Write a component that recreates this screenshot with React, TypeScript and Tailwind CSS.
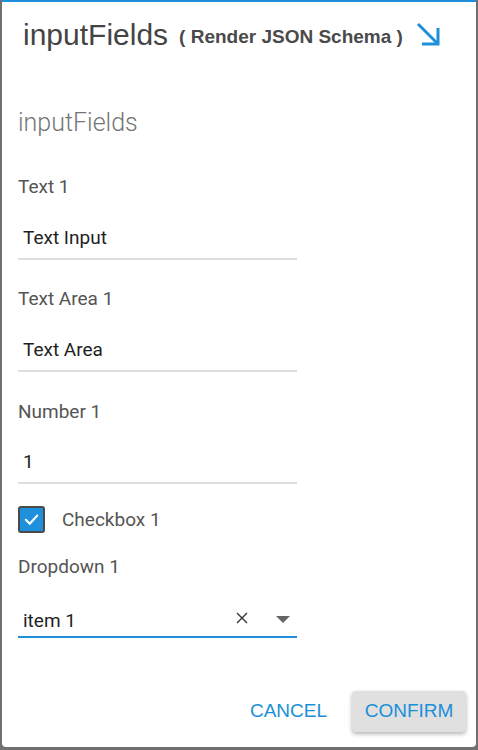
import React from "react";

const roboto = { fontFamily: "Roboto, 'Noto Sans', sans-serif" };

function Label({ children, className = "" }: { children: React.ReactNode; className?: string }) {
  return (
    <div className={`text-[19px] leading-[24px] text-[#555555] ${className}`} style={roboto}>
      {children}
    </div>
  );
}

function Field({ value, className = "" }: { value: string; className?: string }) {
  return (
    <div className={`w-[279px] border-b-2 border-[#dddddd] pl-[5px] pb-[7px] ${className}`}>
      <div className="text-[19px] leading-[26px] text-[#1f1f1f]" style={roboto}>
        {value}
      </div>
    </div>
  );
}

export default function App() {
  return (
    <div className="w-[478px] h-[750px] bg-[#707070] pl-[2px] pr-[2px] pb-[3px] flex">
      <div className="flex-1 bg-white rounded-b-[4px] border-t-2 border-[#1d8fdb] flex flex-col">
        {/* Header */}
        <div className="flex items-start pl-[21px] pr-[35px] pt-[15px]">
          <div className="flex items-baseline gap-[11px]" style={{ fontFamily: "'Liberation Sans', Arial, sans-serif" }}>
            <span className="text-[30px] leading-[36px] text-[#444444]">inputFields</span>
            <span className="relative -top-[2px] text-[19px] leading-[36px] font-bold text-[#4a4a4a]">( Render JSON Schema )</span>
          </div>
          <svg
            className="ml-auto mt-[5px]"
            width="25"
            height="25"
            viewBox="0 0 25 25"
            fill="none"
            stroke="#1d8fdb"
            strokeWidth="3"
          >
            <path d="M2 2 L22 22" />
            <path d="M7.5 22 H22 V7.5" strokeLinecap="square" />
          </svg>
        </div>

        {/* Content */}
        <div className="flex flex-col pl-[16px]">
          <div className="mt-[52px] text-[25px] leading-[28px] font-light text-[#757575]" style={roboto}>
            inputFields
          </div>

          <Label className="mt-[38px]">Text 1</Label>
          <Field value="Text Input" className="mt-[26px]" />

          <Label className="mt-[27px]">Text Area 1</Label>
          <Field value="Text Area" className="mt-[26px]" />

          <Label className="mt-[28px]">Number 1</Label>
          <Field value="1" className="mt-[25px]" />

          <div className="mt-[22px] flex items-center gap-[17px] h-[27px]">
            <div className="w-[27px] h-[27px] rounded-[3px] border-2 border-[#4a4a4a] bg-[#1e90dc] flex items-center justify-center">
              <svg width="17" height="17" viewBox="0 0 24 24" fill="none" stroke="white" strokeWidth="3" strokeLinecap="round" strokeLinejoin="round">
                <path d="M4 12.5 L9.5 18 L20 6.5" />
              </svg>
            </div>
            <Label>Checkbox 1</Label>
          </div>

          <Label className="mt-[22px]">Dropdown 1</Label>
          <div className="mt-[29px] w-[279px] border-b-2 border-[#1d8fdb] pl-[5px] pb-[2px] flex items-center">
            <div className="flex-1 text-[19px] leading-[26px] text-[#1f1f1f]" style={roboto}>
              item 1
            </div>
            <svg width="12" height="12" viewBox="0 0 12 12" stroke="#333333" strokeWidth="1.4" className="mr-[28px] -mt-[6px]">
              <path d="M1 1 L11 11 M11 1 L1 11" />
            </svg>
            <svg width="14" height="8" viewBox="0 0 14 8" className="mr-[7px] -mt-[2px]">
              <path d="M0 0 H14 L7 7 Z" fill="#666666" />
            </svg>
          </div>
        </div>

        {/* Buttons */}
        <div className="mt-auto flex items-center justify-end gap-[14px] pr-[10px] pb-[15px]" style={{ fontFamily: "'Liberation Sans', Arial, sans-serif" }}>
          <button className="h-[41px] px-[11px] text-[19px] text-[#1a8fd8]">CANCEL</button>
          <button className="h-[41px] w-[114px] rounded-[4px] bg-[#e0e0e0] text-[19px] text-[#1a8fd8] shadow-[0_2px_4px_rgba(0,0,0,0.3)]">
            CONFIRM
          </button>
        </div>
      </div>
    </div>
  );
}
